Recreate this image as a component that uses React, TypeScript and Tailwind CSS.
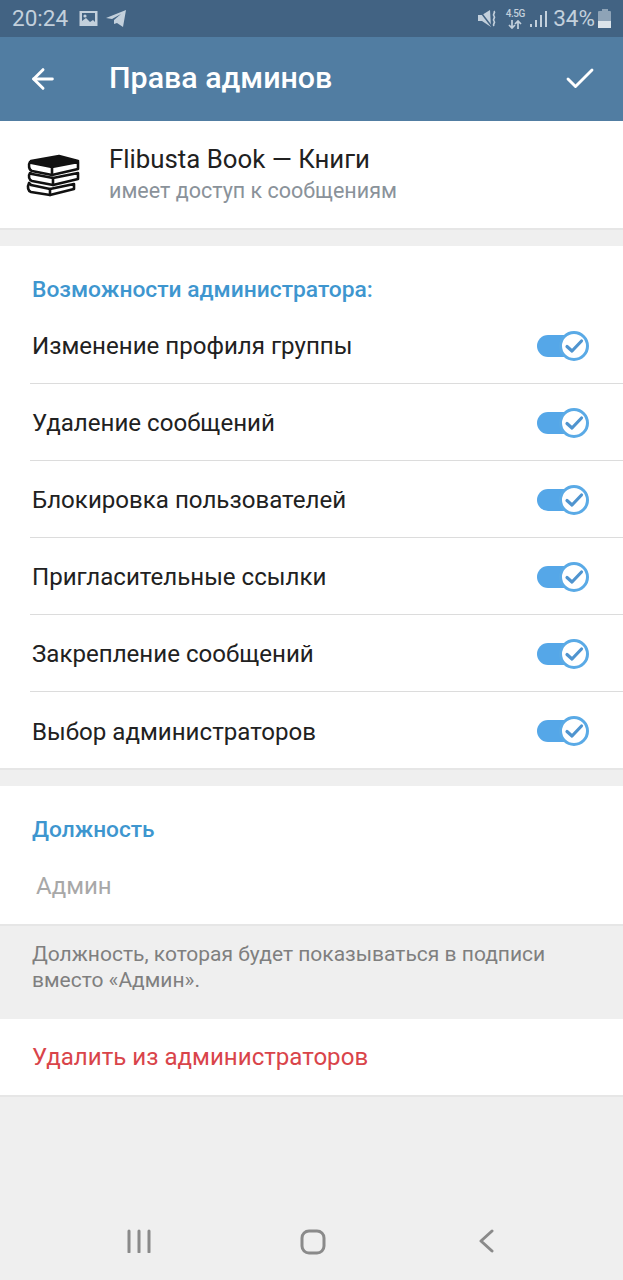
import { ArrowLeft, Check } from 'lucide-react';

const rights = [
  'Изменение профиля группы',
  'Удаление сообщений',
  'Блокировка пользователей',
  'Пригласительные ссылки',
  'Закрепление сообщений',
  'Выбор администраторов',
];

function Toggle() {
  return (
    <div className="relative w-[52px] h-[30px] flex items-center">
      <div className="w-[40px] h-[22px] rounded-full bg-[#55a7e8]" />
      <div className="absolute right-0 top-0 w-[30px] h-[30px] rounded-full bg-white border-[3px] border-[#5aaae6] flex items-center justify-center">
        <svg width="20" height="20" viewBox="0 0 20 20" fill="none" stroke="#4f94cf" strokeWidth="3.2" strokeLinecap="round" strokeLinejoin="round">
          <path d="M3 10.5 L8 15 L17.5 5" />
        </svg>
      </div>
    </div>
  );
}

function Books() {
  return (
    <svg width="54" height="44" viewBox="0 0 54 44" fill="none" stroke="#111" strokeWidth="2.6" strokeLinejoin="round" strokeLinecap="round">
      <path d="M3 30 C1 34 2 38 5 39 L24 42 L48 36 L48 31 L24 36 L5 32 Z" fill="#fff" />
      <path d="M24 36 L24 42" />
      <path d="M4 20 C2 23 3 27 6 28 L27 32 L52 26 L52 20 L27 25 L6 21 Z" fill="#fff" />
      <path d="M27 25 L27 32" />
      <path d="M4 9 C2 12 3 17 6 18 L26 22 L52 16 L52 9 L26 14 L6 10 Z" fill="#fff" />
      <path d="M26 14 L26 22" />
      <path d="M5 8 L33 3 L52 8 L26 13 Z" fill="#111" />
    </svg>
  );
}

function StatusBar() {
  return (
    <div className="h-[37px] bg-[#426383] flex items-center pl-[12px] pr-[12px] text-[#c3d0dc]">
      <span className="text-[22.5px] leading-none">20:24</span>
      <svg className="ml-[11px]" width="19" height="17" viewBox="0 0 19 17" fill="#c3d0dc">
        <path fillRule="evenodd" d="M0.5 1h18v15H0.5z M3 3v8l4-3 4 4 3-2 2 2V3z" />
        <circle cx="6" cy="6" r="1.6" />
      </svg>
      <svg className="ml-[7px]" width="22" height="19" viewBox="0 0 22 19" fill="#c3d0dc">
        <path d="M1 9 L21 1 L18 18 L12 14 L9 15 L9 11 L16 5 L7 10 Z" />
      </svg>
      <div className="ml-auto flex items-center">
        <svg width="21" height="20" viewBox="0 0 21 20" fill="#c3d0dc">
          <path d="M0 6h4l8-5 1 17-9-6H0z" />
          <path d="M1 1 L14 18" stroke="#426383" strokeWidth="1.5" />
          <path d="M16 2c2 2-2 3 0 5s-2 3 0 5-2 3 0 5" fill="none" stroke="#c3d0dc" strokeWidth="1.7" />
        </svg>
        <div className="ml-[6px] w-[20px] flex flex-col items-center font-medium leading-none">
          <span className="text-[10px] tracking-[-0.5px]">4.5G</span>
          <svg className="mt-[1px]" width="14" height="9" viewBox="0 0 14 9" fill="none" stroke="#c3d0dc" strokeWidth="1.7">
            <path d="M4 0v8M1 5l3 3 3-3M10 9V1M7 4l3-3 3 3" />
          </svg>
        </div>
        <svg className="ml-[5px]" width="18" height="18" viewBox="0 0 18 18" fill="#c3d0dc">
          <rect x="0" y="14" width="2" height="3" />
          <rect x="5" y="10" width="2" height="7" />
          <rect x="10" y="5" width="2" height="12" />
          <rect x="15" y="1" width="2" height="16" />
        </svg>
        <span className="ml-[5px] text-[22.5px] leading-none">34%</span>
        <div className="ml-[3px] flex flex-col items-center">
          <div className="w-[6px] h-[2px] bg-[#8ea3b7]" />
          <div className="w-[13px] h-[17px] rounded-[1px] bg-[#8ea3b7] flex flex-col justify-end">
            <div className="h-[7px] bg-[#dce4ea]" />
          </div>
        </div>
      </div>
    </div>
  );
}

export default function App() {
  return (
    <div
      className="w-[623px] h-[1280px] bg-[#efefef] flex flex-col overflow-hidden"
      style={{ fontFamily: 'Roboto, "Noto Sans", sans-serif' }}
    >
      <StatusBar />
      <header className="h-[84px] bg-[#517da2] flex items-center pl-[27px] pr-[25px] text-white">
        <ArrowLeft size={32} strokeWidth={2.2} />
        <h1 className="ml-[50px] -mt-[2px] text-[30.4px] font-medium">Права админов</h1>
        <Check size={36} strokeWidth={1.9} className="ml-auto" />
      </header>

      <section className="h-[109px] bg-white border-b-2 border-[#e6e6e6] flex items-center pl-[26px]">
        <Books />
        <div className="ml-[29px] -mt-[2px]">
          <div className="text-[25.8px] leading-[32px] text-[#212121]">Flibusta Book — Книги</div>
          <div className="mt-[2px] text-[21.5px] leading-[28px] text-[#8a929a]">имеет доступ к сообщениям</div>
        </div>
      </section>

      <section className="mt-[16px] bg-white border-b-2 border-[#e6e6e6] h-[524px] pt-[28px]">
        <h2 className="pl-[32px] text-[22.8px] leading-[32px] font-medium text-[#3e96cf]">Возможности администратора:</h2>
        <ul className="mt-[1px]">
          {rights.map((label, i) => (
            <li key={label} className="pl-[30px]">
              <div className={`h-[77px] flex items-center pr-[34px] pt-[3px] ${i < rights.length - 1 ? 'border-b border-[#dcdcdc]' : ''}`}>
                <span className="pl-[2px] text-[24.1px] text-[#212121]">{label}</span>
                <div className="ml-auto -mt-[2px]"><Toggle /></div>
              </div>
            </li>
          ))}
        </ul>
      </section>

      <section className="mt-[16px] h-[140px] bg-white border-b-2 border-[#e6e6e6] pt-[28px] pl-[32px]">
        <h2 className="text-[22.7px] leading-[32px] font-medium text-[#3e96cf]">Должность</h2>
        <div className="mt-[24px] pl-[4px] text-[24px] leading-[32px] text-[#a8a8a8]">Админ</div>
      </section>

      <p className="h-[93px] pt-[15px] px-[32px] text-[21px] leading-[26px] text-[#7f7f7f]">
        Должность, которая будет показываться в подписи вместо «Админ».
      </p>

      <section className="h-[78px] bg-white border-b-2 border-[#e6e6e6] flex items-center pl-[32px]">
        <span className="text-[24.1px] text-[#d9444a]">Удалить из администраторов</span>
      </section>

      <nav className="mt-auto h-[76px] flex items-start justify-between pl-[127px] pr-[128px] pt-[25px]">
        <svg width="24" height="24" viewBox="0 0 24 24" stroke="#8a8a8a" strokeWidth="3" strokeLinecap="round">
          <path d="M2 2v21M12 2v21M22 2v21" />
        </svg>
        <svg className="-ml-[2px]" width="26" height="26" viewBox="0 0 26 26" fill="none" stroke="#8a8a8a" strokeWidth="3">
          <rect x="2" y="2" width="22" height="22" rx="7" />
        </svg>
        <svg width="18" height="24" viewBox="0 0 18 24" fill="none" stroke="#8a8a8a" strokeWidth="3" strokeLinecap="round" strokeLinejoin="round">
          <path d="M15 2 L4 12 L15 22" />
        </svg>
      </nav>
    </div>
  );
}
